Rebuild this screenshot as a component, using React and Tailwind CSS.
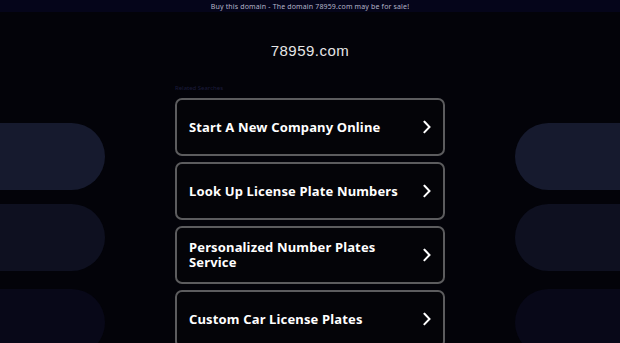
import React from "react";

const items = [
  "Start A New Company Online",
  "Look Up License Plate Numbers",
  "Personalized Number Plates Service",
  "Custom Car License Plates",
];

const pillColors = ["bg-[#161a2e]", "bg-[#0e1020]", "bg-[#080818] mt-[4px]"];

function Chevron() {
  return (
    <svg width="10" height="14" viewBox="0 0 10 14" fill="none" className="shrink-0">
      <path d="M2.5 1.8 L7.5 7 L2.5 12.2" stroke="#ffffff" strokeWidth="2" strokeLinecap="square" strokeLinejoin="miter" />
    </svg>
  );
}

function PillColumn({ side }) {
  return (
    <div className={`w-[105px] shrink-0 flex flex-col gap-[14px] pt-[111px] ${side === "left" ? "items-end" : "items-start"}`}>
      {pillColors.map((c, i) => (
        <div
          key={i}
          className={`w-[165px] h-[67px] shrink-0 ${c} ${side === "left" ? "rounded-r-full" : "rounded-l-full"}`}
        />
      ))}
    </div>
  );
}

export default function App() {
  return (
    <div className="w-[620px] h-[343px] overflow-hidden bg-[#030309] flex flex-col" style={{ fontFamily: '"Noto Sans", "Liberation Sans", sans-serif' }}>
      <div className="w-full h-[12px] shrink-0 bg-[#05051a] flex items-center justify-center text-[7px] leading-none tracking-[0.15px] text-[#b4b4c8]">
        Buy this domain - The domain 78959.com may be for sale!
      </div>
      <div className="flex justify-between">
        <PillColumn side="left" />
        <div className="w-[270px] shrink-0 flex flex-col">
          <div className="mt-[31px] text-center text-[15px] leading-none tracking-[0.5px] text-[#e6e6e6]" style={{ fontFamily: '"Liberation Sans", Arial, sans-serif' }}>
            78959.com
          </div>
          <div className="mt-[27px] text-[6px] leading-none text-[#1c1c3c] mb-[7px]">Related Searches</div>
          <div className="flex flex-col gap-[6px]">
            {items.map((t) => (
              <div key={t} className="h-[58px] shrink-0 rounded-[7px] border-2 border-[#5c5c5e] bg-[#040408] flex items-center justify-between pl-[12px] pr-[11px]">
                <span className="text-[13px] leading-[15px] font-bold tracking-[0.15px] text-white max-w-[225px]">{t}</span>
                <Chevron />
              </div>
            ))}
          </div>
        </div>
        <PillColumn side="right" />
      </div>
    </div>
  );
}
